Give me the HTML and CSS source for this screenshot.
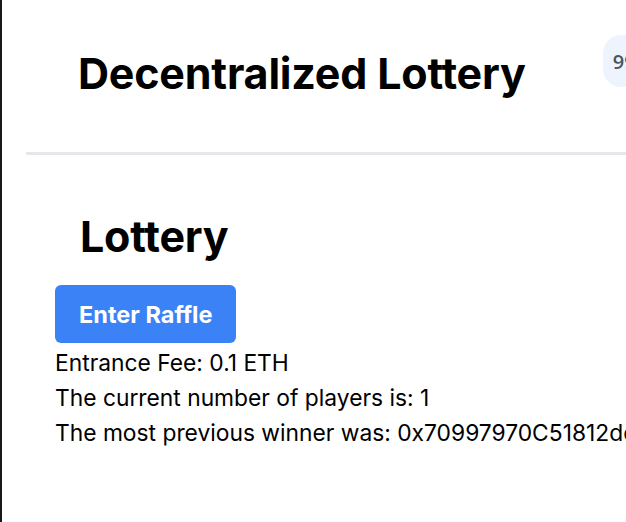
FILE: index.html
```html
<!DOCTYPE html>
<html lang="en">
<head>
<meta charset="utf-8">
<title>Decentralized Lottery</title>
<link rel="stylesheet" href="styles.css">
</head>
<body>
<div class="frame">
  <header class="header">
    <h1 class="brand">Decentralized Lottery</h1>
    <div class="connect">
      <button class="account">9999.87 ETH</button>
    </div>
  </header>
  <main class="lottery">
    <h1 class="title">Lottery</h1>
    <button class="enter">Enter Raffle</button>
    <div class="info">
      <div>Entrance Fee: 0.1 ETH</div>
      <div>The current number of players is: 1</div>
      <div>The most previous winner was: 0x70997970C51812dc3A010C7d01b50e0d17dc79C8</div>
    </div>
  </main>
</div>
</body>
</html>
```
FILE: styles.css
```css
html, body {
  margin: 0;
  padding: 0;
  background: #ffffff;
  overflow: hidden;
}
body {
  font-family: Inter, "Liberation Sans", sans-serif;
  color: #000;
}
.frame {
  border-left: 2px solid #17181c;
  padding-left: 24px;
  min-height: 522px;
  box-sizing: border-box;
  white-space: nowrap;
}
.header {
  display: flex;
  flex-direction: row;
  align-items: flex-start;
  border-bottom: 3px solid #e5e7eb;
  padding: 29px 0 26px 29px;
  height: 97px;
  box-sizing: content-box;
}
.brand {
  margin: 0;
  padding: 20px 23px 0;
  font-size: 43px;
  font-weight: 700;
  line-height: 48px;
  letter-spacing: -0.2px;
}
.connect {
  margin-left: auto;
  padding-top: 6px;
  flex: none;
}
.account {
  margin-left: 54px;
  height: 52px;
  padding: 0 16px 0 10px;
  border: none;
  border-radius: 18px;
  background: #eef4fe;
  color: #4b5563;
  font-family: "Open Sans", sans-serif;
  font-size: 20px;
  font-weight: 600;
}
.lottery {
  padding: 32px 0 0 29px;
}
.title {
  margin: 0;
  padding: 23px 25px;
  font-size: 43px;
  font-weight: 700;
  line-height: 52px;
  letter-spacing: -0.2px;
}
.enter {
  display: block;
  height: 58px;
  padding: 0 24px;
  border: none;
  border-radius: 6px;
  background: #3b82f6;
  color: #fff;
  font-family: Inter, "Liberation Sans", sans-serif;
  font-size: 23.5px;
  font-weight: 700;
}
.info {
  padding-top: 2px;
  font-size: 22.8px;
  line-height: 35px;
}
```
